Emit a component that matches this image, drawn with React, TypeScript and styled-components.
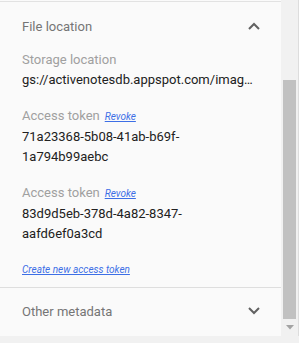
import styled, { createGlobalStyle } from "styled-components";

const GlobalStyle = createGlobalStyle`
  html, body {
    margin: 0;
    padding: 0;
    background: #f1f1f1;
    font-family: Roboto, "Liberation Sans", Arial, sans-serif;
  }
`;

const Frame = styled.div`
  display: flex;
  width: 299px;
  height: 336px;
  background: #fafafa;
  box-shadow: 0 1px 2px rgba(0, 0, 0, 0.18);
`;

const Content = styled.div`
  width: 281px;
  margin-top: 1px;
  border-top: 1px solid #e2e2e2;
  overflow: hidden;
`;

const SectionHeader = styled.div<{ $first?: boolean }>`
  display: flex;
  align-items: center;
  justify-content: space-between;
  height: 46px;
  padding: ${(p) => (p.$first ? "1px" : "0")} 21px 0 22px;
  font-size: 13px;
  color: #757575;
  cursor: pointer;
`;

const SectionBody = styled.div`
  padding: 1px 28px 7px 22px;
  display: flex;
  flex-direction: column;
  gap: 16px;
`;

const Field = styled.div`
  display: flex;
  flex-direction: column;
`;

const Label = styled.div`
  display: flex;
  align-items: baseline;
  gap: 5px;
  font-size: 13px;
  line-height: 20px;
  color: #a0a0a0;
`;

const Value = styled.div<{ $truncate?: boolean }>`
  font-size: 13px;
  line-height: 20px;
  color: #212121;
  ${(p) =>
    p.$truncate
      ? `white-space: nowrap; overflow: hidden; text-overflow: ellipsis;`
      : `word-break: normal;`}
`;

const SmallLink = styled.a`
  font-size: 10px;
  font-style: italic;
  line-height: 20px;
  color: #3d6fe6;
  text-decoration: underline;
  cursor: pointer;
`;

const Divider = styled.div`
  height: 1px;
  background: #dedede;
`;

const Scrollbar = styled.div`
  width: 17px;
  display: flex;
  flex-direction: column;
  background: #f1f1f1;
  border-right: 1px solid #dddddd;
`;

const Thumb = styled.div`
  margin: 80px 2px 0;
  height: 239px;
  background: #c1c1c1;
`;

const ArrowButton = styled.div`
  flex: 1;
  display: flex;
  align-items: center;
  justify-content: center;
`;

const Chevron = ({ up }: { up?: boolean }) => (
  <svg width="12" height="8" viewBox="0 0 12 8">
    <polyline
      points={up ? "1,7 6,2 11,7" : "1,1 6,6 11,1"}
      fill="none"
      stroke="#616161"
      strokeWidth="2"
    />
  </svg>
);

const tokens = [
  "71a23368-5b08-41ab-b69f-1a794b99aebc",
  "83d9d5eb-378d-4a82-8347-aafd6ef0a3cd",
];

export default function App() {
  return (
    <>
      <GlobalStyle />
      <Frame>
        <Content>
          <SectionHeader $first>
            <span>File location</span>
            <Chevron up />
          </SectionHeader>
          <SectionBody>
            <Field>
              <Label>Storage location</Label>
              <Value $truncate>gs://activenotesdb.appspot.com/images/note-image.jpg</Value>
            </Field>
            {tokens.map((t) => (
              <Field key={t}>
                <Label>
                  Access token <SmallLink>Revoke</SmallLink>
                </Label>
                <Value>{t}</Value>
              </Field>
            ))}
            <Field>
              <SmallLink>Create new access token</SmallLink>
            </Field>
          </SectionBody>
          <Divider />
          <SectionHeader>
            <span>Other metadata</span>
            <Chevron />
          </SectionHeader>
        </Content>
        <Scrollbar>
          <Thumb />
          <ArrowButton>
            <svg width="8" height="5" viewBox="0 0 8 5">
              <polygon points="0,0 8,0 4,4.5" fill="#a3a3a3" />
            </svg>
          </ArrowButton>
        </Scrollbar>
      </Frame>
    </>
  );
}
